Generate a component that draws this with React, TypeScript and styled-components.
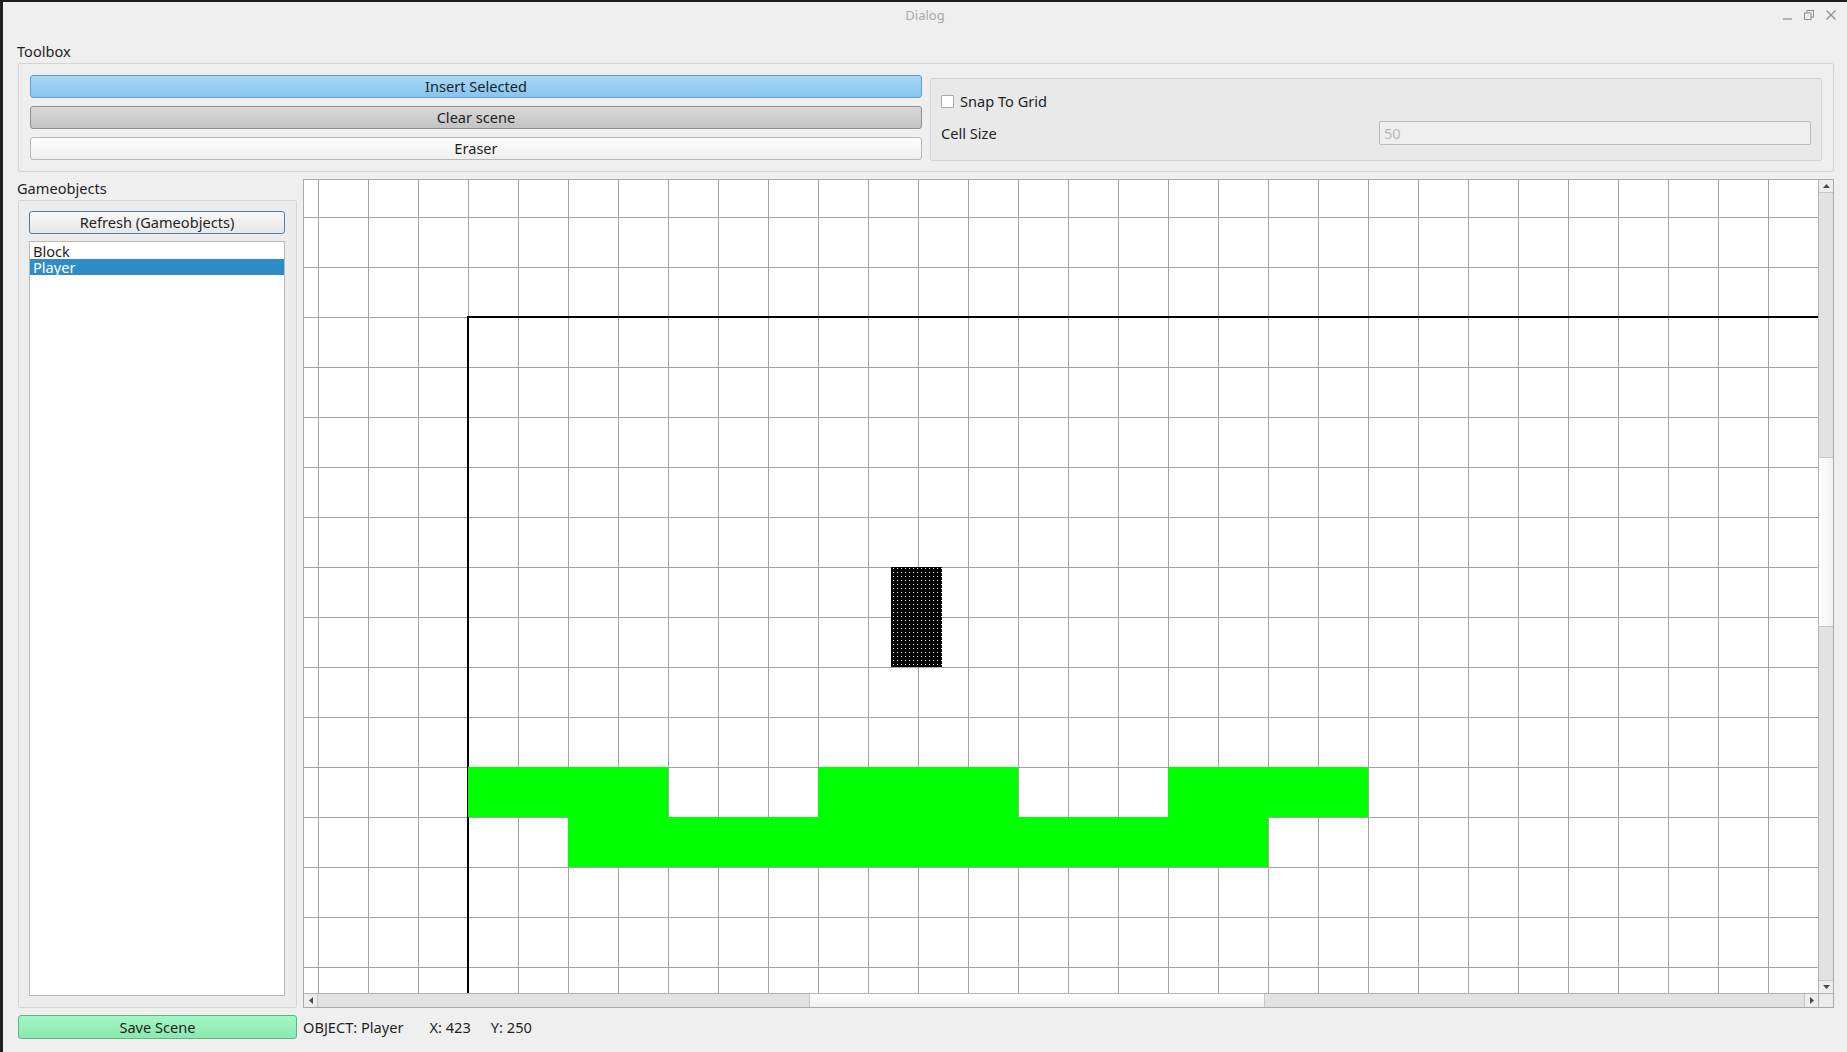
import React from "react";
import styled, { createGlobalStyle, css } from "styled-components";

const GlobalStyle = createGlobalStyle`
  html, body { margin: 0; padding: 0; height: 100%; }
  body {
    background: #1f1f1f;
    font-family: "Noto Sans", "Open Sans", "DejaVu Sans", sans-serif;
    overflow: hidden;
  }
  #root { height: 100%; }
  * { box-sizing: border-box; }
`;

const Window = styled.div`
  height: 100vh;
  display: flex;
  flex-direction: column;
  background: #efefef;
  border-left: 3px solid #1f1f1f;
  border-top: 2px solid #1f1f1f;
  color: #1f1f1f;
  font-size: 14.6px;
`;

const TitleBar = styled.div`
  height: 26px;
  flex: none;
  display: grid;
  grid-template-columns: 1fr auto 1fr;
  align-items: center;
`;

const Title = styled.div`
  grid-column: 2;
  font-size: 13px;
  color: #a9a9a9;
  line-height: 16px;
`;

const Controls = styled.div`
  grid-column: 3;
  justify-self: end;
  display: flex;
  align-items: center;
  gap: 12px;
  padding-right: 11px;
  color: #8e8e8e;
`;

const Content = styled.div`
  flex: 1;
  min-height: 0;
  display: flex;
  flex-direction: column;
  padding: 15px 13px 13px 15px;
`;

const SectionLabel = styled.div<{ $top?: number }>`
  margin-left: -1px;
  margin-top: ${(p) => p.$top ?? 0}px;
  line-height: 17px;
  height: 17px;
  margin-bottom: 3px;
  flex: none;
`;

const GroupBox = styled.div<{ $bg?: string }>`
  border: 1px solid #d5d5d5;
  border-radius: 2px;
  background: ${(p) => p.$bg ?? "#efefef"};
`;

const ToolboxGroup = styled(GroupBox)`
  height: 109px;
  flex: none;
  padding: 11px;
  display: grid;
  grid-template-columns: 1fr 1fr;
  column-gap: 8px;
`;

const ButtonColumn = styled.div`
  display: flex;
  flex-direction: column;
  gap: 8px;
`;

type Variant = "blue" | "grey" | "white" | "focus" | "green";

const variants: Record<Variant, ReturnType<typeof css>> = {
  blue: css`
    background: linear-gradient(#a9d9f8, #86c4ed);
    border-color: #5d9dd2;
  `,
  grey: css`
    background: linear-gradient(#d9d9d9, #c3c3c3);
    border-color: #8f8f8f;
  `,
  white: css`
    background: linear-gradient(#fdfdfd, #efefef);
    border-color: #b7b7b7;
  `,
  focus: css`
    background: linear-gradient(#f8f8f8, #e7e7e7);
    border-color: #4f7ea5;
  `,
  green: css`
    background: linear-gradient(#a4f6c4, #8ae8b0);
    border-color: #55bb80;
  `,
};

const Button = styled.div<{ $variant: Variant }>`
  height: 23px;
  flex: none;
  border: 1px solid;
  border-radius: 3px;
  display: flex;
  align-items: center;
  justify-content: center;
  line-height: 17px;
  color: #1f1f1f;
  ${(p) => variants[p.$variant]}
`;

const SnapBox = styled(GroupBox)`
  align-self: start;
  margin-top: 3px;
  height: 83px;
  border-color: #d3d3d3;
  padding: 15px 10px 15px 10px;
  display: grid;
  grid-template-columns: 1fr 1fr;
  grid-template-rows: 14px 24px;
  column-gap: 6px;
  row-gap: 13px;
  align-items: center;
`;

const CheckRow = styled.div`
  grid-column: 1 / span 2;
  display: flex;
  align-items: center;
  gap: 6px;
  line-height: 17px;
`;

const CheckBox = styled.div`
  width: 13px;
  height: 13px;
  background: #fff;
  border: 1px solid #a9a9a9;
  border-radius: 1px;
`;

const FieldLabel = styled.div`
  line-height: 17px;
`;

const TextInput = styled.div`
  height: 24px;
  border: 1px solid #b9b9b9;
  border-radius: 2px;
  background: #efefef;
  color: #b8b8b8;
  padding-left: 4px;
  display: flex;
  align-items: center;
`;

const MiddleRow = styled.div`
  flex: 1;
  min-height: 0;
  margin-top: 7px;
  display: grid;
  grid-template-columns: 279px 1fr;
  column-gap: 6px;
`;

const LeftColumn = styled.div`
  display: flex;
  flex-direction: column;
  min-height: 0;
`;

const GameGroup = styled(GroupBox)`
  flex: 1;
  min-height: 0;
  background: #ececec;
  padding: 10px 11px 11px 10px;
  display: flex;
  flex-direction: column;
  gap: 7px;
`;

const List = styled.div`
  flex: 1;
  background: #fff;
  border: 1px solid #b8b8b8;
  padding-top: 1px;
`;

const ListItem = styled.div<{ $selected?: boolean }>`
  height: 16px;
  line-height: 16px;
  padding-left: 3px;
  background: ${(p) => (p.$selected ? "#308cc6" : "transparent")};
  color: ${(p) => (p.$selected ? "#ffffff" : "#1f1f1f")};
`;

const ViewFrame = styled.div`
  border: 1px solid #a9a9a9;
  display: grid;
  grid-template-columns: 1fr 15px;
  grid-template-rows: 1fr 14px;
  background: #efefef;
  min-height: 0;
`;

const Viewport = styled.div`
  position: relative;
  overflow: hidden;
  background-color: #ffffff;
  background-image: linear-gradient(to right, #a3a3a3 1px, transparent 1px),
    linear-gradient(to bottom, #a3a3a3 1px, transparent 1px);
  background-size: 50px 50px;
  background-position: 14px 37px;
`;

const SceneRect = styled.div`
  position: absolute;
  left: 163px;
  top: 136px;
  right: -20px;
  bottom: -20px;
  border-left: 2px solid #000;
  border-top: 2px solid #000;
`;

const Block = styled.div`
  position: absolute;
  background: #00ff00;
`;

const PlayerSvg = styled.svg`
  position: absolute;
  display: block;
`;

const VScroll = styled.div`
  border-left: 1px solid #b3b3b3;
  display: flex;
  flex-direction: column;
  background: #e2e2e2;
`;

const HScroll = styled.div`
  border-top: 1px solid #b3b3b3;
  display: flex;
  background: #e2e2e2;
`;

const Corner = styled.div`
  border-left: 1px solid #b3b3b3;
  border-top: 1px solid #b3b3b3;
  background: #ececec;
`;

const ArrowBox = styled.div<{ $vertical?: boolean; $end?: boolean }>`
  flex: none;
  background: #ededed;
  display: flex;
  align-items: center;
  justify-content: center;
  ${(p) =>
    p.$vertical
      ? css`
          height: 13px;
          ${p.$end ? "border-top: 1px solid #c4c4c4;" : "border-bottom: 1px solid #c4c4c4;"}
        `
      : css`
          width: 14px;
          ${p.$end ? "border-left: 1px solid #c4c4c4;" : "border-right: 1px solid #c4c4c4;"}
        `}
`;

const Track = styled.div<{ $vertical?: boolean }>`
  flex: 1;
  display: flex;
  flex-direction: ${(p) => (p.$vertical ? "column" : "row")};
`;

const Thumb = styled.div<{ $vertical?: boolean }>`
  flex: none;
  ${(p) =>
    p.$vertical
      ? css`
          background: linear-gradient(to right, #ffffff, #f1f1f1);
          border-top: 1px solid #c8c8c8;
          border-bottom: 1px solid #c8c8c8;
        `
      : css`
          background: linear-gradient(#ffffff, #f1f1f1);
          border-left: 1px solid #c8c8c8;
          border-right: 1px solid #c8c8c8;
        `}
`;

const BottomRow = styled.div`
  flex: none;
  margin-top: 7px;
  height: 24px;
  display: grid;
  grid-template-columns: 279px 1fr;
  column-gap: 6px;
`;

const SaveButton = styled(Button)`
  height: 24px;
`;

const Status = styled.div`
  display: flex;
  align-items: center;
  line-height: 17px;
`;

const StatusItem = styled.span<{ $gap: number }>`
  margin-right: ${(p) => p.$gap}px;
`;

const blocks = [
  { x: 164, y: 587, w: 200, h: 50 },
  { x: 514, y: 587, w: 200, h: 50 },
  { x: 864, y: 587, w: 200, h: 50 },
  { x: 264, y: 637, w: 700, h: 50 },
];

const player = { x: 587, y: 387, w: 51, h: 100 };

const vThumb = { offset: 264, size: 170 };
const hThumb = { offset: 491, size: 456 };

function Arrow({ dir }: { dir: "up" | "down" | "left" | "right" }) {
  const pts: Record<string, string> = {
    up: "0,4 7,4 3.5,0",
    down: "0,0 7,0 3.5,4",
    left: "4,0 4,7 0,3.5",
    right: "0,0 0,7 4,3.5",
  };
  const vert = dir === "up" || dir === "down";
  return (
    <svg width={vert ? 7 : 4} height={vert ? 4 : 7} viewBox={vert ? "0 0 7 4" : "0 0 4 7"}>
      <polygon points={pts[dir]} fill="#4a4a4a" />
    </svg>
  );
}

export default function App() {
  return (
    <>
      <GlobalStyle />
      <Window>
        <TitleBar>
          <Title>Dialog</Title>
          <Controls>
            <svg width="9" height="10" viewBox="0 0 9 10">
              <line x1="0" y1="9" x2="9" y2="9" stroke="#8e8e8e" strokeWidth="1.2" />
            </svg>
            <svg width="10" height="10" viewBox="0 0 10 10">
              <rect x="3" y="0.5" width="6.5" height="6.5" fill="none" stroke="#8e8e8e" strokeWidth="1" />
              <rect x="0.5" y="3" width="6.5" height="6.5" fill="#efefef" stroke="#8e8e8e" strokeWidth="1" />
            </svg>
            <svg width="10" height="10" viewBox="0 0 10 10">
              <line x1="0.5" y1="0.5" x2="9.5" y2="9.5" stroke="#8e8e8e" strokeWidth="1.3" />
              <line x1="9.5" y1="0.5" x2="0.5" y2="9.5" stroke="#8e8e8e" strokeWidth="1.3" />
            </svg>
          </Controls>
        </TitleBar>
        <Content>
          <SectionLabel>Toolbox</SectionLabel>
          <ToolboxGroup>
            <ButtonColumn>
              <Button $variant="blue">Insert Selected</Button>
              <Button $variant="grey">Clear scene</Button>
              <Button $variant="white">Eraser</Button>
            </ButtonColumn>
            <SnapBox $bg="#e9e9e9">
              <CheckRow>
                <CheckBox />
                <span>Snap To Grid</span>
              </CheckRow>
              <FieldLabel>Cell Size</FieldLabel>
              <TextInput>50</TextInput>
            </SnapBox>
          </ToolboxGroup>
          <MiddleRow>
            <LeftColumn>
              <SectionLabel $top={1}>Gameobjects</SectionLabel>
              <GameGroup>
                <Button $variant="focus">Refresh (Gameobjects)</Button>
                <List>
                  <ListItem>Block</ListItem>
                  <ListItem $selected>Player</ListItem>
                </List>
              </GameGroup>
            </LeftColumn>
            <ViewFrame>
              <Viewport>
                <SceneRect />
                {blocks.map((b, i) => (
                  <Block key={i} style={{ left: b.x, top: b.y, width: b.w, height: b.h }} />
                ))}
                <PlayerSvg
                  width={player.w}
                  height={player.h}
                  style={{ left: player.x, top: player.y }}
                >
                  <defs>
                    <pattern id="dense1" x="0" y="0" width="4" height="4" patternUnits="userSpaceOnUse">
                      <rect x="0" y="0" width="4" height="4" fill="#000" />
                      <rect x="2" y="1" width="1" height="1" fill="#fff" />
                    </pattern>
                  </defs>
                  <rect x="0" y="0" width={player.w} height={player.h} fill="url(#dense1)" shapeRendering="crispEdges" />
                </PlayerSvg>
              </Viewport>
              <VScroll>
                <ArrowBox $vertical>
                  <Arrow dir="up" />
                </ArrowBox>
                <Track $vertical>
                  <Thumb $vertical style={{ marginTop: vThumb.offset, height: vThumb.size }} />
                </Track>
                <ArrowBox $vertical $end>
                  <Arrow dir="down" />
                </ArrowBox>
              </VScroll>
              <HScroll>
                <ArrowBox>
                  <Arrow dir="left" />
                </ArrowBox>
                <Track>
                  <Thumb style={{ marginLeft: hThumb.offset, width: hThumb.size }} />
                </Track>
                <ArrowBox $end>
                  <Arrow dir="right" />
                </ArrowBox>
              </HScroll>
              <Corner />
            </ViewFrame>
          </MiddleRow>
          <BottomRow>
            <SaveButton $variant="green">Save Scene</SaveButton>
            <Status>
              <StatusItem $gap={26}>OBJECT: Player</StatusItem>
              <StatusItem $gap={20}>X: 423</StatusItem>
              <StatusItem $gap={0}>Y: 250</StatusItem>
            </Status>
          </BottomRow>
        </Content>
      </Window>
    </>
  );
}
